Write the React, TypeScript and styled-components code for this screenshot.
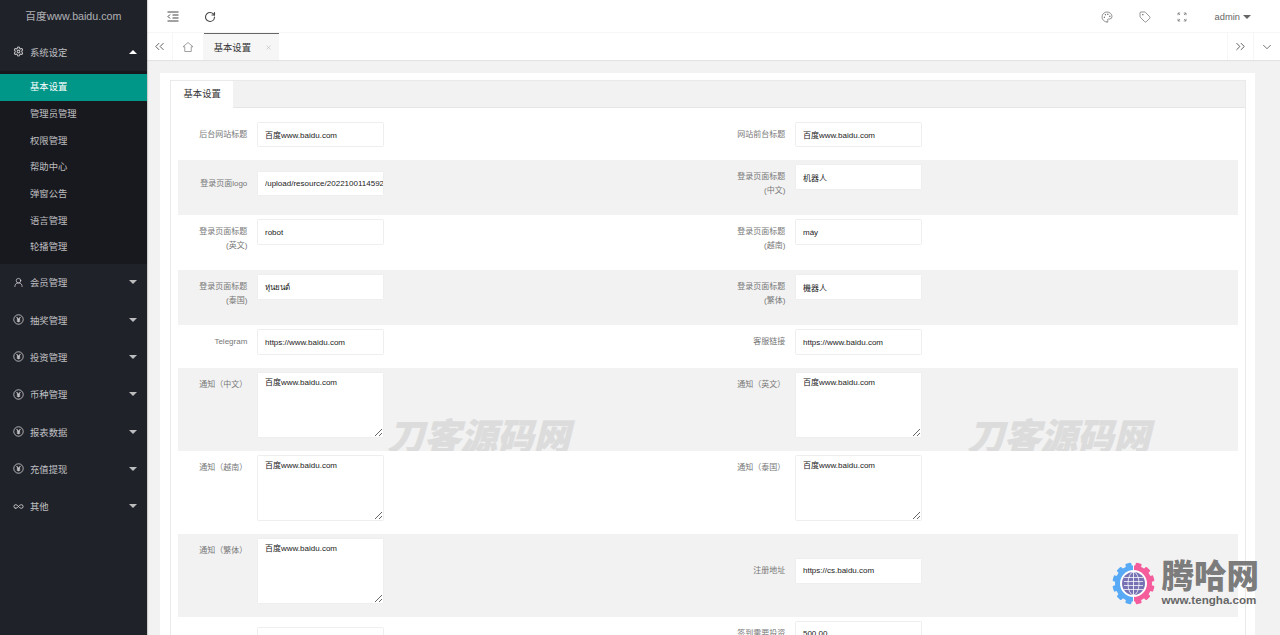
import React from "react";
import styled, { createGlobalStyle } from "styled-components";
import { ChevronDown, ChevronsLeft, ChevronsRight, Palette, RotateCw, Tag, X, UserRound, Infinity as InfinityIcon, Settings } from "lucide-react";

const FONT = `"Liberation Sans", "Noto Sans CJK SC", sans-serif`;

const Global = createGlobalStyle`
  html, body { margin: 0; padding: 0; height: 100%; overflow: hidden; }
  body { font-family: ${FONT}; background: #f2f2f2; }
  * { box-sizing: border-box; }
`;

const Shell = styled.div`
  position: relative;
  display: flex;
  width: 1280px;
  height: 635px;
  overflow: hidden;
`;

const Sidebar = styled.aside`
  flex: 0 0 146.67px;
  background: #20222a;
  box-shadow: 1px 0 1px rgba(0, 0, 0, 0.15);
  z-index: 1;
`;
const Brand = styled.div`
  height: 33.33px;
  line-height: 33.33px;
  text-align: center;
  font-size: 10.67px;
  color: rgba(255, 255, 255, 0.65);
`;
const NavHead = styled.div`
  display: flex;
  align-items: center;
  height: 37.33px;
  padding: 0 9.5px 0 12.5px;
  color: rgba(255, 255, 255, 0.72);
  font-size: 9.33px;
`;
const NavIcon = styled.span`
  flex: 0 0 17.5px;
  display: flex;
  align-items: center;
`;
const NavLabel = styled.span`
  flex: 1;
`;
const Caret = styled.span<{ $up?: boolean; $tone?: string }>`
  width: 0;
  height: 0;
  border-left: 4px solid transparent;
  border-right: 4px solid transparent;
  border-${(p) => (p.$up ? "bottom" : "top")}: 4px solid ${(p) => p.$tone || "rgba(255,255,255,.7)"};
`;
const SubNav = styled.div`
  background: #18191f;
  padding: 3.67px 0 2.67px;
`;
const SubItem = styled.div<{ $active?: boolean }>`
  height: 26.67px;
  line-height: 26.67px;
  padding-left: 30px;
  font-size: 9.33px;
  background: ${(p) => (p.$active ? "#009688" : "transparent")};
  color: ${(p) => (p.$active ? "#fff" : "rgba(255,255,255,.72)")};
`;

const Main = styled.main`
  flex: 1;
  min-width: 0;
  display: flex;
  flex-direction: column;
`;
const TopBar = styled.header`
  flex: 0 0 33.33px;
  display: flex;
  align-items: center;
  padding-top: 1px;
  background: #fff;
  border-bottom: 1px solid #f6f6f6;
  color: #444;
`;
const TopTool = styled.span`
  display: flex;
  align-items: center;
  margin-left: 25px;
  &:first-child { margin-left: 20px; }
`;
const Spacer = styled.div`
  flex: 1;
`;
const RightTool = styled.span`
  flex: 0 0 37.33px;
  display: flex;
  justify-content: center;
  color: #666;
`;
const AdminMenu = styled.div`
  display: flex;
  align-items: center;
  gap: 3px;
  margin: 0 29px 0 14px;
  font-size: 9.33px;
  color: #666;
`;

const TabBar = styled.nav`
  flex: 0 0 26.67px;
  display: flex;
  align-items: stretch;
  background: #fff;
  box-shadow: 0 1px 1px rgba(0, 0, 0, 0.06);
  color: #555;
`;
const TabTool = styled.span<{ $w: number }>`
  flex: 0 0 ${(p) => p.$w}px;
  display: flex;
  align-items: center;
  justify-content: center;
  border-right: 1px solid #f6f6f6;
  &.end { border-right: 0; border-left: 1px solid #f6f6f6; }
`;
const OpenTab = styled.div`
  flex: 0 0 75px;
  display: flex;
  align-items: center;
  justify-content: space-between;
  padding: 0 7px 0 10px;
  background: #f6f6f6;
  border-top: 1.5px solid #666;
  font-size: 9.33px;
  color: #333;
`;

const Body = styled.div`
  flex: 1;
  min-height: 0;
  padding: 13.33px 25px 0 13.33px;
`;
const Card = styled.section`
  height: 100%;
  background: #fff;
  padding: 6.67px 9px 0 10px;
`;
const TabBox = styled.div`
  height: 100%;
  border: 0.67px solid #eaeaea;
  border-bottom: 0;
`;
const TabTitle = styled.div`
  height: 27px;
  background: #f2f2f2;
  border-bottom: 0.67px solid #e6e6e6;
`;
const TabActive = styled.div`
  width: 62px;
  height: 27px;
  line-height: 27px;
  padding-left: 12.5px;
  background: #fff;
  font-size: 9.33px;
  color: #333;
`;
const Form = styled.div`
  padding: 9.83px 7.5px 0;
`;
const Row = styled.div<{ $shade?: boolean }>`
  position: relative;
  overflow: hidden;
  display: grid;
  grid-template-columns: 538px 1fr;
  align-items: center;
  background: ${(p) => (p.$shade ? "#f2f2f2" : "#fff")};
`;
const Field = styled.div`
  display: flex;
  padding: 4px 0 13.33px;
`;
const Label = styled.label`
  flex: 0 0 68.83px;
  padding: 6px 0 5px 15.5px;
  margin-right: 10px;
  line-height: 13.33px;
  font-size: 8px;
  text-align: right;
  color: #777;
`;
const TextInput = styled.input`
  width: 126.67px;
  height: 25.33px;
  padding: 0 0 0 6.67px;
  border: 0.67px solid #eeeeee;
  border-radius: 1.5px;
  background: #fff;
  outline: none;
  font-family: ${FONT};
  font-size: 8px;
  color: #222;
`;
const TextArea = styled.textarea`
  display: block;
  width: 126.67px;
  height: 65.67px;
  padding: 4px 6.67px;
  border: 0.67px solid #eeeeee;
  border-radius: 1.5px;
  background: #fff;
  outline: none;
  resize: vertical;
  line-height: 11px;
  font-family: ${FONT};
  font-size: 8px;
  color: #222;
`;
const Watermark = styled.div<{ $left: number }>`
  position: absolute;
  left: ${(p) => p.$left}px;
  top: 49px;
  white-space: nowrap;
  line-height: 42px;
  font-size: 36.5px;
  font-weight: 900;
  font-style: italic;
  color: #dcdcdc;
  -webkit-text-stroke: 0.4px #dcdcdc;
  pointer-events: none;
`;

const Badge = styled.div`
  position: absolute;
  left: 1112px;
  top: 562px;
  display: flex;
  gap: 6.5px;
  pointer-events: none;
`;
const BadgeText = styled.div`
  display: flex;
  flex-direction: column;
`;
const BadgeName = styled.div`
  font-size: 32.5px;
  line-height: 31px;
  font-weight: 900;
  color: #7c7c7c;
  white-space: nowrap;
`;
const BadgeUrl = styled.div`
  font-size: 11.6px;
  line-height: 13px;
  font-weight: 700;
  color: #666;
`;

const RmbIcon = () => (
  <svg width="11" height="11" viewBox="0 0 20 20" fill="none" stroke="currentColor">
    <circle cx="10" cy="10" r="8.6" strokeWidth="1.6" />
    <path d="M6.500 5.500 10 10l3.500-4.500M10 10v5M7 10.500h6M7 13h6" strokeWidth="2" />
  </svg>
);
const ShrinkIcon = () => (
  <svg width="12" height="11" viewBox="0 0 24 22" fill="none" stroke="#444" strokeWidth="2">
    <path d="M1 2h22M11 8h12M11 14h12M1 20h22" />
    <path d="M6 7 2 11l4 4" />
  </svg>
);
const FullIcon = () => (
  <svg width="10" height="10" viewBox="0 0 20 20" fill="none" stroke="#888" strokeWidth="1.8">
    <path d="M2 2l4 4M2 6.500V2h4.500M18 2l-4 4M18 6.500V2h-4.500M2 18l4-4M2 13.500V18h4.500M18 18l-4-4M18 13.500V18h-4.500" />
  </svg>
);
const HomeOutline = () => (
  <svg width="12" height="12" viewBox="0 0 24 24" fill="none" stroke="#888" strokeWidth="1.6">
    <path d="M2 11.500 12 3l10 8.500h-3.500V21h-13v-9.500z" />
  </svg>
);
const TenghaLogo = () => {
  const teeth = Array.from({ length: 12 }, (_, i) => 15 + i * 30);
  const traces = [-6, -2, 2, 6];
  return (
    <svg width="43" height="43" viewBox="0 0 86 86">
      {teeth.map((a) => (
        <rect
          key={a}
          x="37"
          y="1"
          width="12"
          height="14"
          rx="2"
          fill={a < 180 ? "#f45c9c" : "#58aaf6"}
          transform={`rotate(${a} 43 43)`}
        />
      ))}
      <path d="M42 7a36 36 0 0 0 0 72z" fill="#58aaf6" />
      <path d="M44 7a36 36 0 0 1 0 72z" fill="#f45c9c" />
      <circle cx="43" cy="43" r="27" fill="#fff" />
      <circle cx="43" cy="43" r="23" fill="#7772b4" />
      <path d="M43 2v82" stroke="#fff" strokeWidth="1.600" />
      <ellipse cx="43" cy="43" rx="11" ry="23" fill="none" stroke="#fff" strokeWidth="1.500" />
      {traces.map((t) => (
        <path key={t} d={`M24 ${43 + t * 2}H62`} stroke="#fff" strokeWidth="1.500" />
      ))}
    </svg>
  );
};

type Cell = { label: string; value?: string; area?: boolean };
type RowData = { cells: [Cell, Cell]; mark?: boolean };
const BAIDU = "百度www.baidu.com";
const rows: RowData[] = [
  { cells: [{ label: "后台网站标题", value: BAIDU }, { label: "网站前台标题", value: BAIDU }] },
  { cells: [{ label: "登录页面logo", value: "/upload/resource/20221001145926.png" }, { label: "登录页面标题(中文)", value: "机器人" }] },
  { cells: [{ label: "登录页面标题(英文)", value: "robot" }, { label: "登录页面标题(越南)", value: "máy" }] },
  { cells: [{ label: "登录页面标题(泰国)", value: "หุ่นยนต์" }, { label: "登录页面标题(繁体)", value: "機器人" }] },
  { cells: [{ label: "Telegram", value: "https://www.baidu.com" }, { label: "客服链接", value: "https://www.baidu.com" }] },
  { mark: true, cells: [{ label: "通知（中文）", value: BAIDU, area: true }, { label: "通知（英文）", value: BAIDU, area: true }] },
  { cells: [{ label: "通知（越南）", value: BAIDU, area: true }, { label: "通知（泰国）", value: BAIDU, area: true }] },
  { cells: [{ label: "通知（繁体）", value: BAIDU, area: true }, { label: "注册地址", value: "https://cs.baidu.com" }] },
  { cells: [{ label: "", value: "" }, { label: "签到需要投资金额", value: "500.00" }] },
];

const subItems = ["基本设置", "管理员管理", "权限管理", "帮助中心", "弹窗公告", "语言管理", "轮播管理"];
const navGroups = [
  { name: "会员管理", icon: <UserRound size={11} strokeWidth={1.7} /> },
  { name: "抽奖管理", icon: <RmbIcon /> },
  { name: "投资管理", icon: <RmbIcon /> },
  { name: "币种管理", icon: <RmbIcon /> },
  { name: "报表数据", icon: <RmbIcon /> },
  { name: "充值提现", icon: <RmbIcon /> },
  { name: "其他", icon: <InfinityIcon size={11} strokeWidth={2} /> },
];

export default function App() {
  return (
    <Shell>
      <Global />
      <Sidebar>
        <Brand>{BAIDU}</Brand>
        <NavHead>
          <NavIcon><Settings size={11} strokeWidth={2.2} /></NavIcon>
          <NavLabel>系统设定</NavLabel>
          <Caret $up $tone="#fff" />
        </NavHead>
        <SubNav>
          {subItems.map((s, i) => (
            <SubItem key={s} $active={i === 0}>{s}</SubItem>
          ))}
        </SubNav>
        {navGroups.map((g) => (
          <NavHead key={g.name}>
            <NavIcon>{g.icon}</NavIcon>
            <NavLabel>{g.name}</NavLabel>
            <Caret />
          </NavHead>
        ))}
      </Sidebar>
      <Main>
        <TopBar>
          <TopTool><ShrinkIcon /></TopTool>
          <TopTool><RotateCw size={12} strokeWidth={2.2} /></TopTool>
          <Spacer />
          <RightTool><Palette size={12} strokeWidth={1.4} /></RightTool>
          <RightTool><Tag size={12} strokeWidth={1.4} /></RightTool>
          <RightTool><FullIcon /></RightTool>
          <AdminMenu>admin<Caret $tone="#666" /></AdminMenu>
        </TopBar>
        <TabBar>
          <TabTool $w={26}><ChevronsLeft size={15} strokeWidth={1.5} /></TabTool>
          <TabTool $w={31}><HomeOutline /></TabTool>
          <OpenTab>基本设置<X size={7} strokeWidth={1.6} color="#aaa" /></OpenTab>
          <Spacer />
          <TabTool $w={26.5} className="end"><ChevronsRight size={15} strokeWidth={1.5} /></TabTool>
          <TabTool $w={27} className="end"><ChevronDown size={14} strokeWidth={1.4} /></TabTool>
        </TabBar>
        <Body>
          <Card>
            <TabBox>
              <TabTitle><TabActive>基本设置</TabActive></TabTitle>
              <Form>
                {rows.map((r, i) => (
                  <Row key={i} $shade={i % 2 === 1}>
                    {r.cells.map((c, j) => (
                      <Field key={j}>
                        <Label>{c.label}</Label>
                        {c.area ? (
                          <TextArea readOnly value={c.value} />
                        ) : (
                          <TextInput readOnly value={c.value} />
                        )}
                      </Field>
                    ))}
                    {r.mark && (
                      <>
                        <Watermark $left={209}>刀客源码网</Watermark>
                        <Watermark $left={789}>刀客源码网</Watermark>
                      </>
                    )}
                  </Row>
                ))}
              </Form>
            </TabBox>
          </Card>
        </Body>
      </Main>
      <Badge>
        <TenghaLogo />
        <BadgeText>
          <BadgeName>腾哈网</BadgeName>
          <BadgeUrl>www.tengha.com</BadgeUrl>
        </BadgeText>
      </Badge>
    </Shell>
  );
}
